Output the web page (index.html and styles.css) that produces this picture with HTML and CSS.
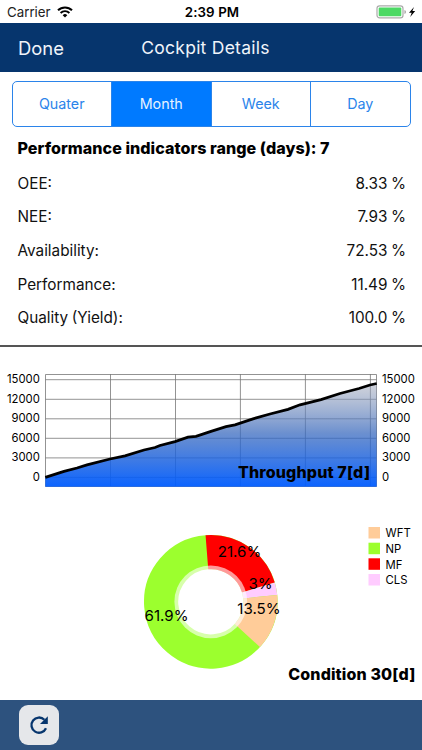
FILE: index.html
```html
<!DOCTYPE html>
<html lang="en">
<head>
  <meta charset="UTF-8" />
  <meta name="viewport" content="width=device-width, initial-scale=1.0"/>
  <title>Cockpit Details</title>
  <link rel="stylesheet" href="styles.css">
</head>
<body>
  <div class="status-bar">
    <div class="carrier">
      <span>Carrier</span>
      <svg width="16" height="12" viewBox="0 0 16 12">
        <path d="M1 4.3a10 10 0 0 1 14 0" fill="none" stroke="#000" stroke-width="2"/>
        <path d="M3.6 7a6.2 6.2 0 0 1 8.8 0" fill="none" stroke="#000" stroke-width="1.9"/>
        <path d="M8 11.6L5.7 9.2a3.3 3.3 0 0 1 4.6 0z"/>
      </svg>
    </div>
    <div class="clock">2:39 PM</div>
    <div class="battery">
      <svg width="41" height="14" viewBox="0 0 41 14">
        <rect x="1" y=".9" width="26" height="12" rx="2.6" fill="#fff" stroke="#aaa" stroke-width="1.2"/>
        <rect x="2.7" y="2.5" width="22.6" height="8.8" rx="1" fill="#4cd964"/>
        <path d="M28.5 5v4q1.4-.5 1.4-2t-1.4-2z" fill="#999"/>
        <path d="M38 2l-5 5.8h2.7L34.2 12l5-5.9h-2.8z"/>
      </svg>
    </div>
  </div>

  <header>
    <a class="done">Done</a>
    <h1>Cockpit Details</h1>
  </header>

  <main>
    <div class="tabs">
      <button>Quater</button>
      <button class="active">Month</button>
      <button>Week</button>
      <button>Day</button>
    </div>

    <section class="indicators">
      <h2>Performance indicators range (days): 7</h2>
      <div class="row"><span>OEE:</span><span>8.33 %</span></div>
      <div class="row"><span>NEE:</span><span>7.93 %</span></div>
      <div class="row"><span>Availability:</span><span>72.53 %</span></div>
      <div class="row"><span>Performance:</span><span>11.49 %</span></div>
      <div class="row"><span>Quality (Yield):</span><span>100.0 %</span></div>
    </section>

    <section class="throughput">
      <svg width="422" height="153" viewBox="0 347 422 153">
        <defs>
          <linearGradient id="fill" gradientUnits="userSpaceOnUse" x1="0" y1="380" x2="0" y2="486">
            <stop offset="0" stop-color="#adafb9" stop-opacity=".5"/>
            <stop offset=".5" stop-color="#3b6bbf" stop-opacity=".75"/>
            <stop offset="1" stop-color="#005cff" stop-opacity=".95"/>
          </linearGradient>
        </defs>
        <g class="grid">
          <path d="M45.5 486.5V374.5H376.5V486.5Z"/>
          <path d="M45.5 379.7H376.5M45.5 399.3H376.5M45.5 418.8H376.5M45.5 438.3H376.5M45.5 457.9H376.5M45.5 477.4H376.5"/>
          <path d="M110.5 374V486M175.5 374V486M240.4 374V486M305.4 374V486M370.4 374V486"/>
        </g>
        <path class="area" d="M45.3 477.3L64 471.3L77 468L87 464.8L110 459L125 455.8L144 450L155 447.5L160 445.5L175 441.6L188 437.2L196 436.3L211 431.3L226 426.7L235 424.8L253 418.8L270 414L288 409.3L300 404.8L321 399.6L340 393.5L359 388.5L370 385L376.7 383.5V486.8H45.3Z"/>
        <path class="line" d="M45.3 477.3L64 471.3L77 468L87 464.8L110 459L125 455.8L144 450L155 447.5L160 445.5L175 441.6L188 437.2L196 436.3L211 431.3L226 426.7L235 424.8L253 418.8L270 414L288 409.3L300 404.8L321 399.6L340 393.5L359 388.5L370 385L376.7 383.5"/>
        <g class="axis left">
          <text x="39.8" y="383.2">15000</text>
          <text x="39.8" y="402.8">12000</text>
          <text x="39.8" y="422.3">9000</text>
          <text x="39.8" y="441.8">6000</text>
          <text x="39.8" y="461.4">3000</text>
          <text x="39.8" y="480.9">0</text>
        </g>
        <g class="axis">
          <text x="382" y="383.2">15000</text>
          <text x="382" y="402.8">12000</text>
          <text x="382" y="422.3">9000</text>
          <text x="382" y="441.8">6000</text>
          <text x="382" y="461.4">3000</text>
          <text x="382" y="480.9">0</text>
        </g>
        <text class="chart-title" x="370" y="477.7" textLength="132">Throughput 7[d]</text>
      </svg>
    </section>

    <section class="condition">
      <svg width="422" height="200" viewBox="0 500 422 200">
        <!-- slices are dashes on one circle, lengths in percent -->
        <g class="slices" transform="rotate(-94.5 210.8 601.8)">
          <circle cx="210.8" cy="601.8" r="49.7" pathLength="100" stroke="#9cff2e"/>
          <circle cx="210.8" cy="601.8" r="49.7" pathLength="100" stroke="#ff0000" stroke-dasharray="21.6 78.4"/>
          <circle cx="210.8" cy="601.8" r="49.7" pathLength="100" stroke="#ffccff" stroke-dasharray="3 97" stroke-dashoffset="-21.6"/>
          <circle cx="210.8" cy="601.8" r="49.7" pathLength="100" stroke="#ffcc99" stroke-dasharray="13.5 86.5" stroke-dashoffset="-24.6"/>
        </g>
        <circle cx="210.8" cy="601.8" r="36.4" fill="#fff" fill-opacity=".6"/>
        <g class="percent">
          <text x="239.5" y="557.3">21.6%</text>
          <text x="260.5" y="588.6">3%</text>
          <text x="259" y="614.3">13.5%</text>
          <text x="166.5" y="620.5">61.9%</text>
        </g>
        <g class="legend">
          <rect x="368.5" y="527" width="11.5" height="11.5" fill="#ffcc99"/>
          <text x="385.6" y="537.3">WFT</text>
          <rect x="368.5" y="542.7" width="11.5" height="11.5" fill="#9cff2e"/>
          <text x="385.6" y="552.7">NP</text>
          <rect x="368.5" y="558.3" width="11.5" height="11.5" fill="#ff0000"/>
          <text x="385.6" y="568.5">MF</text>
          <rect x="368.5" y="574" width="11.5" height="11.5" fill="#ffccff"/>
          <text x="385.6" y="584.3">CLS</text>
        </g>
        <text class="chart-title" x="415.3" y="680" textLength="127">Condition 30[d]</text>
      </svg>
    </section>
  </main>

  <footer>
    <button class="refresh" aria-label="Refresh">
      <svg width="20" height="20" viewBox="0 0 20 20">
        <path d="M17 13.2A7.6 7.6 0 1 1 15.4 4.7" fill="none" stroke="#06356d" stroke-width="2.3"/>
        <path d="M18.8 1.2V9H11Z" fill="#06356d"/>
      </svg>
    </button>
  </footer>
</body>
</html>
```
FILE: styles.css
```css
* {
  box-sizing: border-box;
}
body {
  font-family: Inter, 'Liberation Sans', sans-serif;
  background: #fff;
  color: #111;
  margin: 0;
  height: 750px;
  display: flex;
  flex-direction: column;
  overflow: hidden;
}
svg {
  display: block;
}
.status-bar {
  display: grid;
  grid-template-columns: 1fr auto 1fr;
  align-items: center;
  height: 23px;
  padding: 1px 5px 0 7px;
  font-size: 13.3px;
  color: #000;
}
.carrier {
  display: flex;
  align-items: center;
  gap: 6px;
  color: #222;
}
.clock {
  font-weight: 600;
  letter-spacing: 0.1px;
}
.battery {
  justify-self: end;
}
header {
  display: grid;
  grid-template-columns: 1fr auto 1fr;
  align-items: center;
  height: 49px;
  padding: 0 29px 0 18px;
  background: #06356d;
  color: #f0f4fa;
}
.done {
  font-size: 18.4px;
}
h1 {
  margin: 0;
  font-size: 17.5px;
  font-weight: 400;
  letter-spacing: 0.25px;
}
main {
  flex: 1;
}
.tabs {
  display: flex;
  height: 46px;
  margin: 9px 11.5px 0;
  border: 1.5px solid #2b84ea;
  border-radius: 5px;
  overflow: hidden;
}
.tabs button {
  flex: 1;
  padding: 0 0 1px;
  border: none;
  border-left: 1px solid #2b84ea;
  background: none;
  font: 14.3px Inter, sans-serif;
  color: #2b84ea;
}
.tabs button:first-child {
  border-left: none;
}
.tabs .active {
  background: #007aff;
  color: #e6f2ff;
}
.indicators {
  height: 220px;
  padding: 5px 16px 0 17.5px;
  border-bottom: 2px solid #555;
}
h2 {
  margin: 0;
  font-size: 16.1px;
  font-weight: 800;
  letter-spacing: 0.03px;
  line-height: 33.5px;
  color: #000;
}
.row {
  display: flex;
  justify-content: space-between;
  height: 33.7px;
  line-height: 35px;
  font-size: 15.3px;
  word-spacing: -0.8px;
}
.grid path {
  fill: none;
  stroke: #777;
  stroke-width: 0.8;
}
.area {
  fill: url(#fill);
}
.line {
  fill: none;
  stroke: #000;
  stroke-width: 2.8;
}
.axis {
  font-size: 11.3px;
}
.left {
  text-anchor: end;
}
.percent {
  font-size: 15.1px;
  text-anchor: middle;
}
.legend {
  font-size: 11.3px;
}
.chart-title {
  font-size: 16px;
  font-weight: 800;
  text-anchor: end;
  fill: #000;
}
.slices circle {
  fill: none;
  stroke-width: 34.2;
}
footer {
  height: 50px;
  padding: 5px 18.5px;
  background: #2d527e;
}
.refresh {
  display: flex;
  align-items: center;
  justify-content: center;
  width: 40px;
  height: 40px;
  padding: 0;
  border: none;
  border-radius: 9px;
  background: #e5e7ea;
}
```
